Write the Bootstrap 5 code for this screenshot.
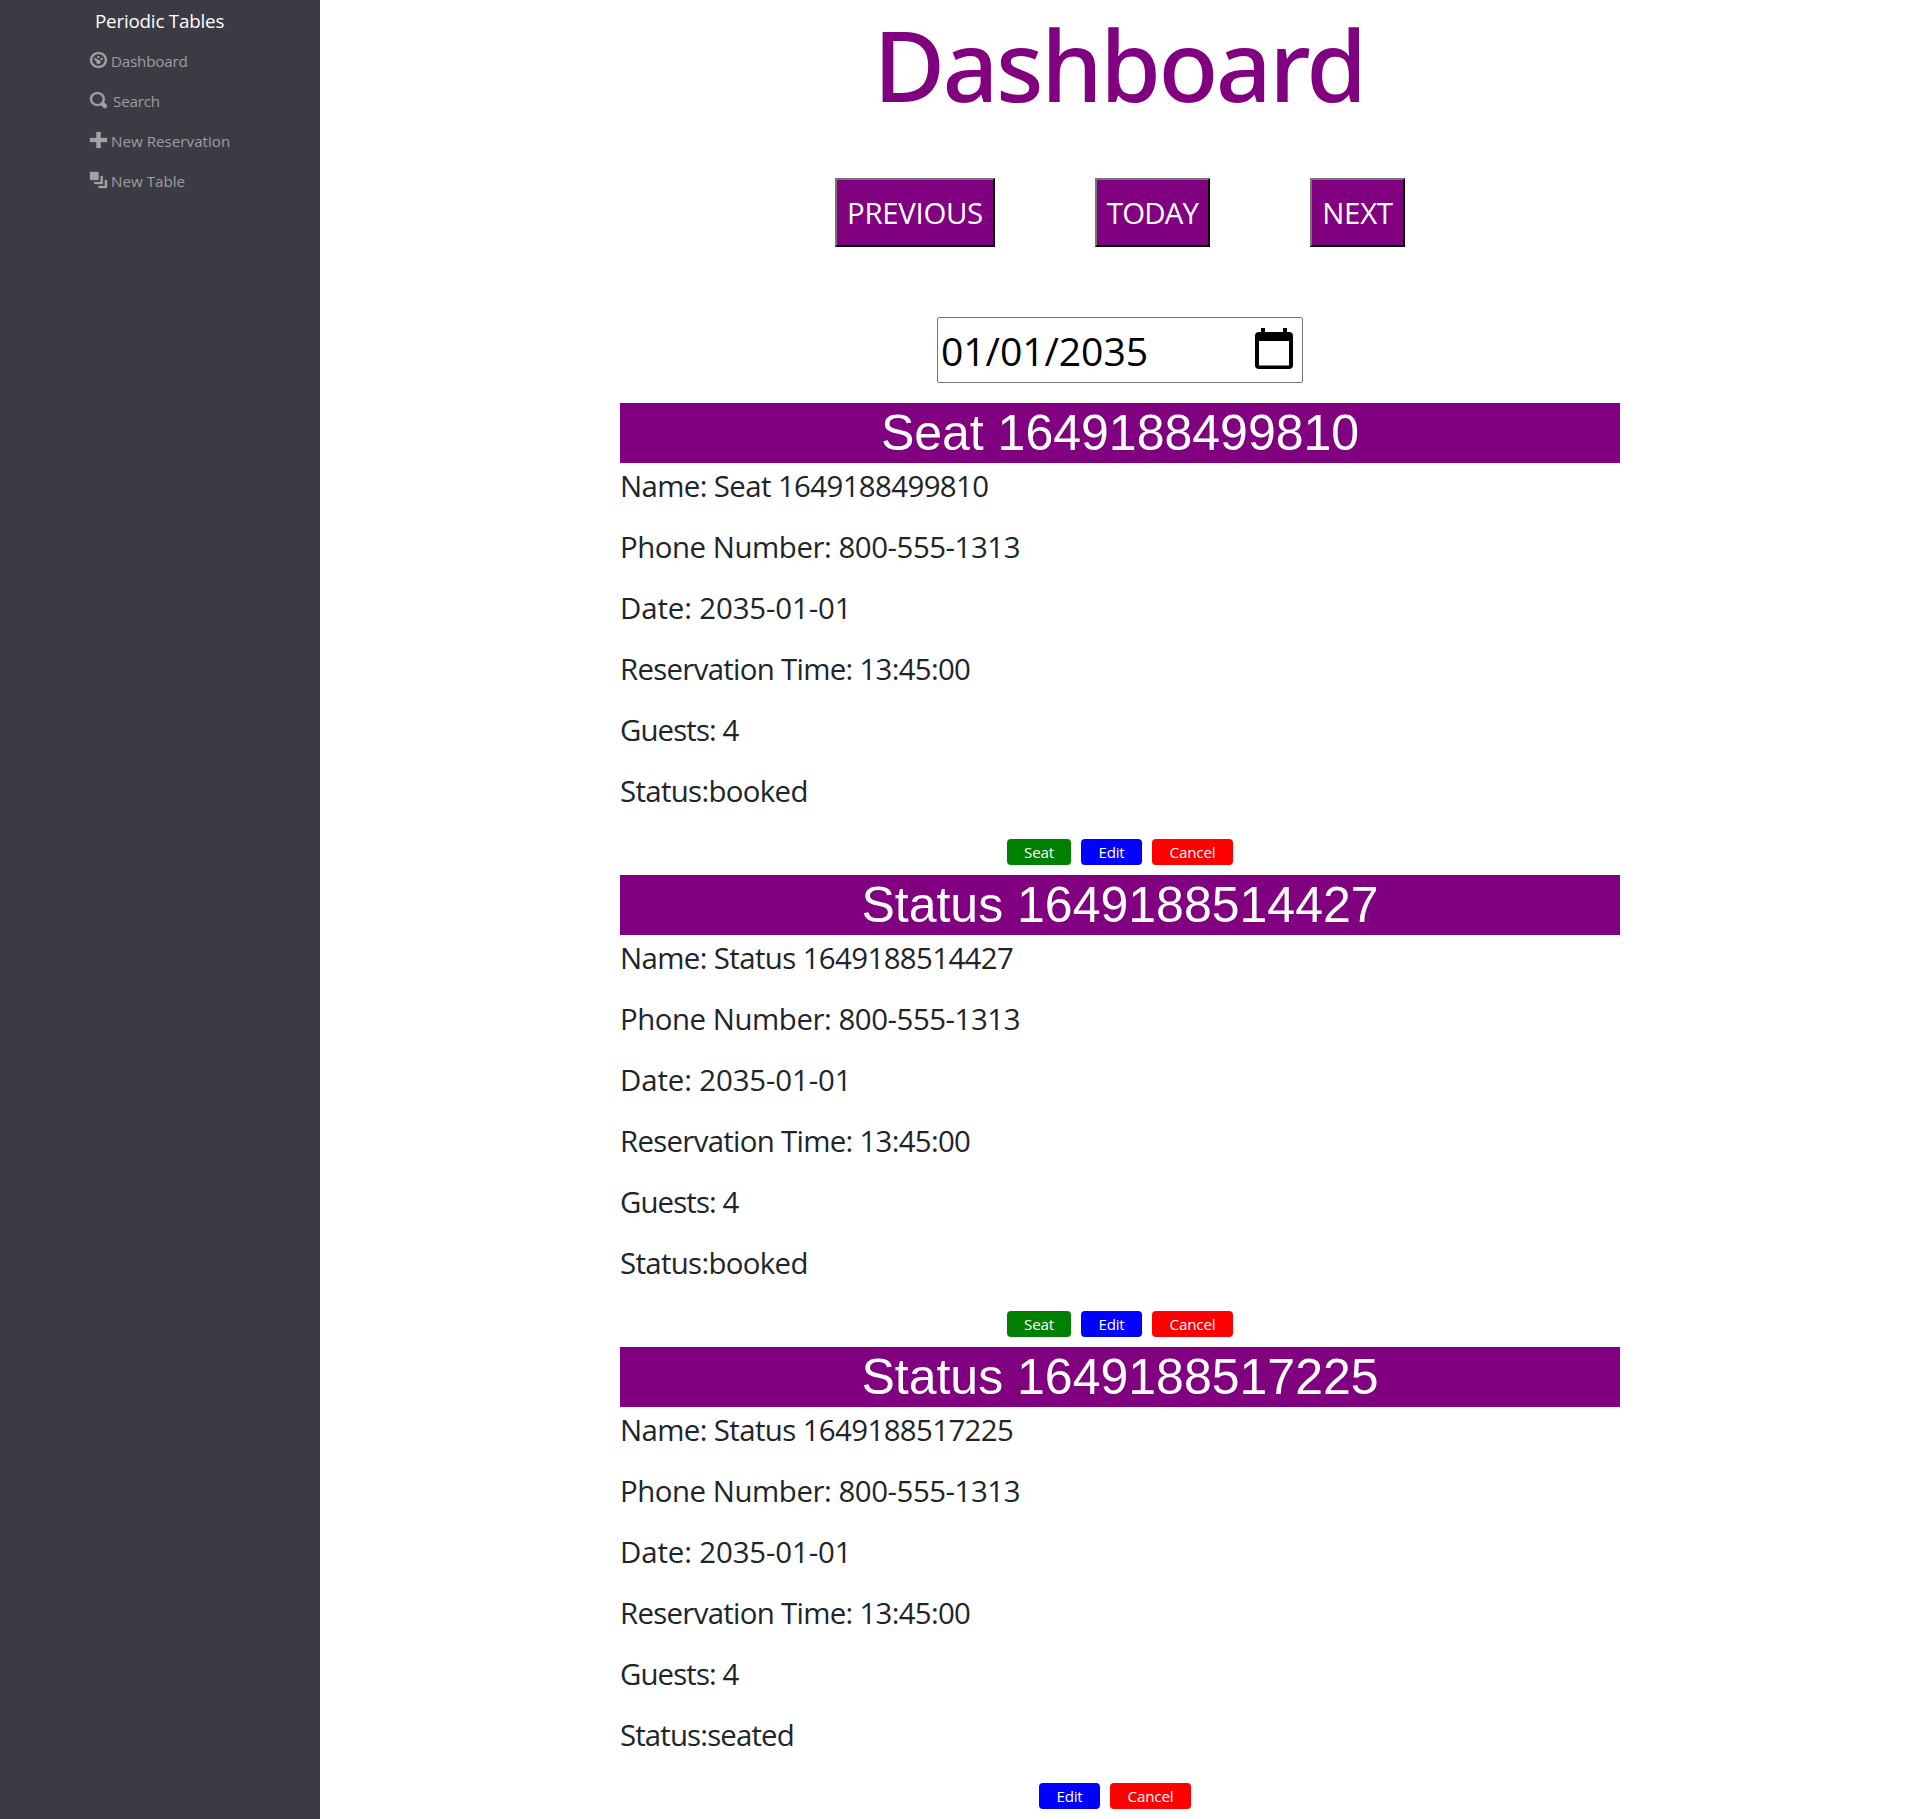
<!DOCTYPE html>
<html lang="en">
<head>
<meta charset="utf-8">
<meta name="viewport" content="width=device-width, initial-scale=1">
<title>Periodic Tables</title>
<link href="https://cdn.jsdelivr.net/npm/bootstrap@5.3.0/dist/css/bootstrap.min.css" rel="stylesheet">
<style>
body{font-family:"Open Sans","Noto Sans",sans-serif;color:#212529;background:#fff}
.side-menu{width:320px;min-height:1819px;background:#3c3b44;padding-left:90px;font-size:15.2px}
.side-brand{height:40px;padding:3px 0 0 5px;font-size:18.8px;letter-spacing:-.2px;color:#fff}
.side-menu .nav-link{height:40px;padding:0;color:#9d9da1;gap:4px}
.side-menu .nav-link span{padding-top:2px}
.side-menu svg{width:17px;height:16px;fill:#a2a2a6;stroke:#a2a2a6;stroke-width:.15;overflow:visible}
.side-menu .nav-link .find-text{padding-left:2px}
.tight{letter-spacing:-.2px}
.page-title{font-family:"Noto Sans",sans-serif;font-size:98px;font-weight:500;line-height:128px;letter-spacing:-2.5px;color:purple;padding-right:2px}
.day-nav{gap:100px;margin-top:50px}
.day-btn{height:69px;padding:2px 0 0;border:2px outset #767676;border-color:#767676 #212121 #212121 #767676;background:purple;color:#fff;font-size:29.4px}
.day-prev{width:160px;letter-spacing:-.3px}
.day-today{width:115px;letter-spacing:-.8px}
.day-next{width:95px;letter-spacing:-.3px}
.date-box{width:366px;height:66px;margin-top:70px;border:1px solid #767676;border-radius:2px;padding:1px 9px 0 3px;font-size:39.2px;line-height:64px;letter-spacing:-.1px;color:#000}
.date-box svg{width:38px;height:42px;margin-bottom:3px}
.booking-list{width:1000px;margin-top:20px}
.booking-head{height:60px;line-height:60px;font-family:"Liberation Sans",Arial,sans-serif;font-size:50px;font-weight:400;background:purple;color:#fff}
.booking p{font-size:29.4px;line-height:45px;padding-top:1px;margin-bottom:15px;white-space:nowrap}
.f-name{letter-spacing:-.61px}
.f-phone{letter-spacing:-.45px}
.f-date{letter-spacing:-.12px}
.f-time{letter-spacing:-.7px}
.f-guests{letter-spacing:-.9px}
.f-booked{letter-spacing:-.67px}
.f-seated{letter-spacing:-.86px}
.actions{gap:10px;padding:10px 0}
.act{height:26px;line-height:25px;padding:0;border:0;border-radius:4px;color:#fff;font-size:15.2px;letter-spacing:-.2px}
.act-seat{width:64px;background:green}
.act-edit{width:61px;background:blue}
.act-cancel{width:81px;background:red}
.no-seat{padding-right:10px}
</style>
</head>
<body>
<div class="d-flex">
  <nav class="side-menu flex-shrink-0">
    <div class="side-brand d-flex align-items-center">Periodic Tables</div>
    <div class="nav flex-column">
      <a class="nav-link d-flex align-items-center tight" href="#"><svg viewBox="0 0 8 8" preserveAspectRatio="none"><path d="M4 0c-2.2 0-4 1.8-4 4s1.8 4 4 4 4-1.8 4-4-1.8-4-4-4zm0 1c1.66 0 3 1.34 3 3s-1.34 3-3 3-3-1.34-3-3 1.34-3 3-3zm0 1c-.28 0-.5.22-.5.5s.22.5.5.5.5-.22.5-.5-.22-.5-.5-.5zm-1.66 1a.5.5 0 0 0-.19.84l.91.91c-.02.08-.06.16-.06.25 0 .55.45 1 1 1s1-.45 1-1-.45-1-1-1c-.09 0-.17.04-.25.06l-.91-.91a.5.5 0 0 0-.44-.16.5.5 0 0 0-.06 0zm3.16 0c-.28 0-.5.22-.5.5s.22.5.5.5.5-.22.5-.5-.22-.5-.5-.5z"/></svg><span>Dashboard</span></a>
      <a class="nav-link d-flex align-items-center tight" href="#"><svg viewBox="0 0 8 8" preserveAspectRatio="none"><path d="M3.5 0c-1.93 0-3.5 1.57-3.5 3.5s1.57 3.5 3.5 3.5c.59 0 1.17-.14 1.66-.41a1 1 0 0 0 .13.13l1 1a1.02 1.02 0 1 0 1.44-1.44l-1-1a1 1 0 0 0-.16-.13c.27-.49.44-1.06.44-1.66 0-1.93-1.55-3.5-3.5-3.5zm0 1c1.39 0 2.5 1.1 2.5 2.5 0 .66-.24 1.27-.66 1.72l-.03.03a1 1 0 0 0-.13.13c-.44.4-1.04.63-1.69.63-1.4 0-2.5-1.1-2.5-2.5s1.1-2.5 2.5-2.5z"/></svg><span class="find-text">Search</span></a>
      <a class="nav-link d-flex align-items-center" href="#"><svg viewBox="0 0 8 8" preserveAspectRatio="none"><path d="M3 0v3h-3v2h3v3h2v-3h3v-2h-3v-3h-2z"/></svg><span>New Reservation</span></a>
      <a class="nav-link d-flex align-items-center" href="#"><svg viewBox="0 0 8 8" preserveAspectRatio="none"><path d="M0 0v4h4v-4h-4zm5 2v3h-3v1h4v-4h-1zm2 2v3h-3v1h4v-4h-1z"/></svg><span>New Table</span></a>
    </div>
  </nav>
  <main class="flex-grow-1 d-flex flex-column align-items-center">
    <h1 class="page-title m-0">Dashboard</h1>
    <div class="day-nav d-flex">
      <button class="day-btn day-prev" type="button">PREVIOUS</button>
      <button class="day-btn day-today" type="button">TODAY</button>
      <button class="day-btn day-next" type="button">NEXT</button>
    </div>
    <div class="date-box d-flex justify-content-between align-items-center">
      <span>01/01/2035</span>
      <svg viewBox="0 0 38 42"><path fill="#000" fill-rule="evenodd" d="M6 0h4v4h18V0h4v4h2a4 4 0 0 1 4 4v29a4 4 0 0 1-4 4H4a4 4 0 0 1-4-4V8a4 4 0 0 1 4-4h2zM4 13v24.500h30V13z"/></svg>
    </div>
    <div class="booking-list">
      <section class="booking">
        <h2 class="booking-head text-center m-0">Seat 1649188499810</h2>
        <p class="f-name">Name: Seat 1649188499810</p>
        <p class="f-phone">Phone Number: 800-555-1313</p>
        <p class="f-date">Date: 2035-01-01</p>
        <p class="f-time">Reservation Time: 13:45:00</p>
        <p class="f-guests">Guests: 4</p>
        <p class="f-booked">Status:booked</p>
        <div class="actions d-flex justify-content-center">
          <button class="act act-seat" type="button">Seat</button>
          <button class="act act-edit" type="button">Edit</button>
          <button class="act act-cancel" type="button">Cancel</button>
        </div>
      </section>
      <section class="booking">
        <h2 class="booking-head text-center m-0">Status 1649188514427</h2>
        <p class="f-name">Name: Status 1649188514427</p>
        <p class="f-phone">Phone Number: 800-555-1313</p>
        <p class="f-date">Date: 2035-01-01</p>
        <p class="f-time">Reservation Time: 13:45:00</p>
        <p class="f-guests">Guests: 4</p>
        <p class="f-booked">Status:booked</p>
        <div class="actions d-flex justify-content-center">
          <button class="act act-seat" type="button">Seat</button>
          <button class="act act-edit" type="button">Edit</button>
          <button class="act act-cancel" type="button">Cancel</button>
        </div>
      </section>
      <section class="booking">
        <h2 class="booking-head text-center m-0">Status 1649188517225</h2>
        <p class="f-name">Name: Status 1649188517225</p>
        <p class="f-phone">Phone Number: 800-555-1313</p>
        <p class="f-date">Date: 2035-01-01</p>
        <p class="f-time">Reservation Time: 13:45:00</p>
        <p class="f-guests">Guests: 4</p>
        <p class="f-seated">Status:seated</p>
        <div class="actions no-seat d-flex justify-content-center">
          <button class="act act-edit" type="button">Edit</button>
          <button class="act act-cancel" type="button">Cancel</button>
        </div>
      </section>
    </div>
  </main>
</div>
<script src="https://cdn.jsdelivr.net/npm/bootstrap@5.3.0/dist/js/bootstrap.bundle.min.js"></script>
</body>
</html>
